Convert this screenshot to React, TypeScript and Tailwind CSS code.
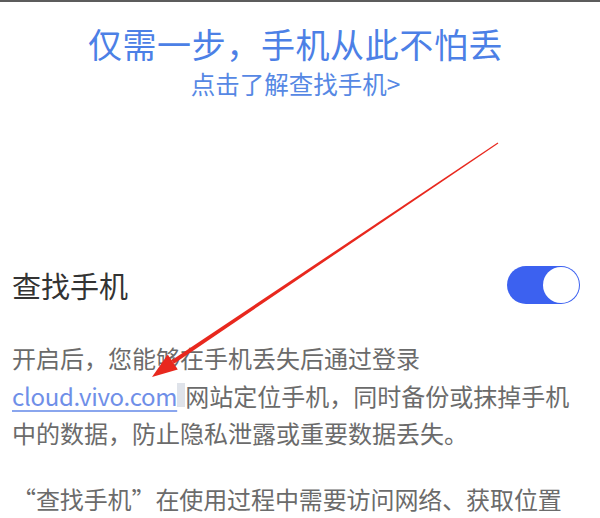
import React from "react";

const font = { fontFamily: '"Noto Sans CJK SC", "Noto Sans", sans-serif' };

export default function App() {
  return (
    <div
      className="relative w-[600px] h-[518px] overflow-hidden bg-white border-t-2 border-[#5c5c5c]"
      style={font}
    >
      <div className="flex flex-col items-center pt-[24px] pr-[9px]">
        <div className="text-[34px] leading-[36px] text-[#4c80e6] whitespace-nowrap tracking-[0.6px]">
          仅需一步，手机从此不怕丢
        </div>
        <div className="mt-[8px] text-[24.5px] leading-[28px] text-[#5688e4] whitespace-nowrap">
          点击了解查找手机&gt;
        </div>
      </div>

      <div className="mt-[163px] flex items-center justify-between h-[48px] pl-[12px] pr-[20px]">
        <div className="text-[29px] leading-[40px] text-[#333333]">查找手机</div>
        <div className="flex items-center justify-end w-[73px] h-[38px] rounded-full bg-[#3c61f0] p-[1px]">
          <div className="w-[36px] h-[36px] rounded-full bg-white" />
        </div>
      </div>

      <div className="mt-[30px] pl-[12px] text-[24px] leading-[37.5px] text-[#6b6b6b] whitespace-nowrap">
        <div>开启后，您能够在手机丢失后通过登录</div>
        <div className="flex items-center">
          <span className="text-[#6f8fe8] underline decoration-[#8aa6ee] underline-offset-[4px] tracking-[-0.3px]">
            cloud.vivo.com
          </span>
          <span className="inline-block w-[8px] h-[24px] bg-[#dfe3ea]" />
          <span>网站定位手机，同时备份或抹掉手机</span>
        </div>
        <div>中的数据，防止隐私泄露或重要数据丢失。</div>
      </div>

      <div className="mt-[28px] pl-[12px] text-[24px] leading-[37.5px] text-[#6b6b6b] whitespace-nowrap tracking-[-0.1px]">
        “查找手机”在使用过程中需要访问网络、获取位置
      </div>

      <svg
        className="absolute left-0 top-0 pointer-events-none"
        width="600"
        height="518"
        viewBox="0 0 600 518"
      >
        <polygon
          points="498.3,141.4 497.7,140.6 171.6,358.3 173.9,361.7"
          fill="#e8281e"
        />
        <polygon points="152,375 177.8,367.5 167.7,352.5" fill="#e8281e" />
      </svg>
    </div>
  );
}
